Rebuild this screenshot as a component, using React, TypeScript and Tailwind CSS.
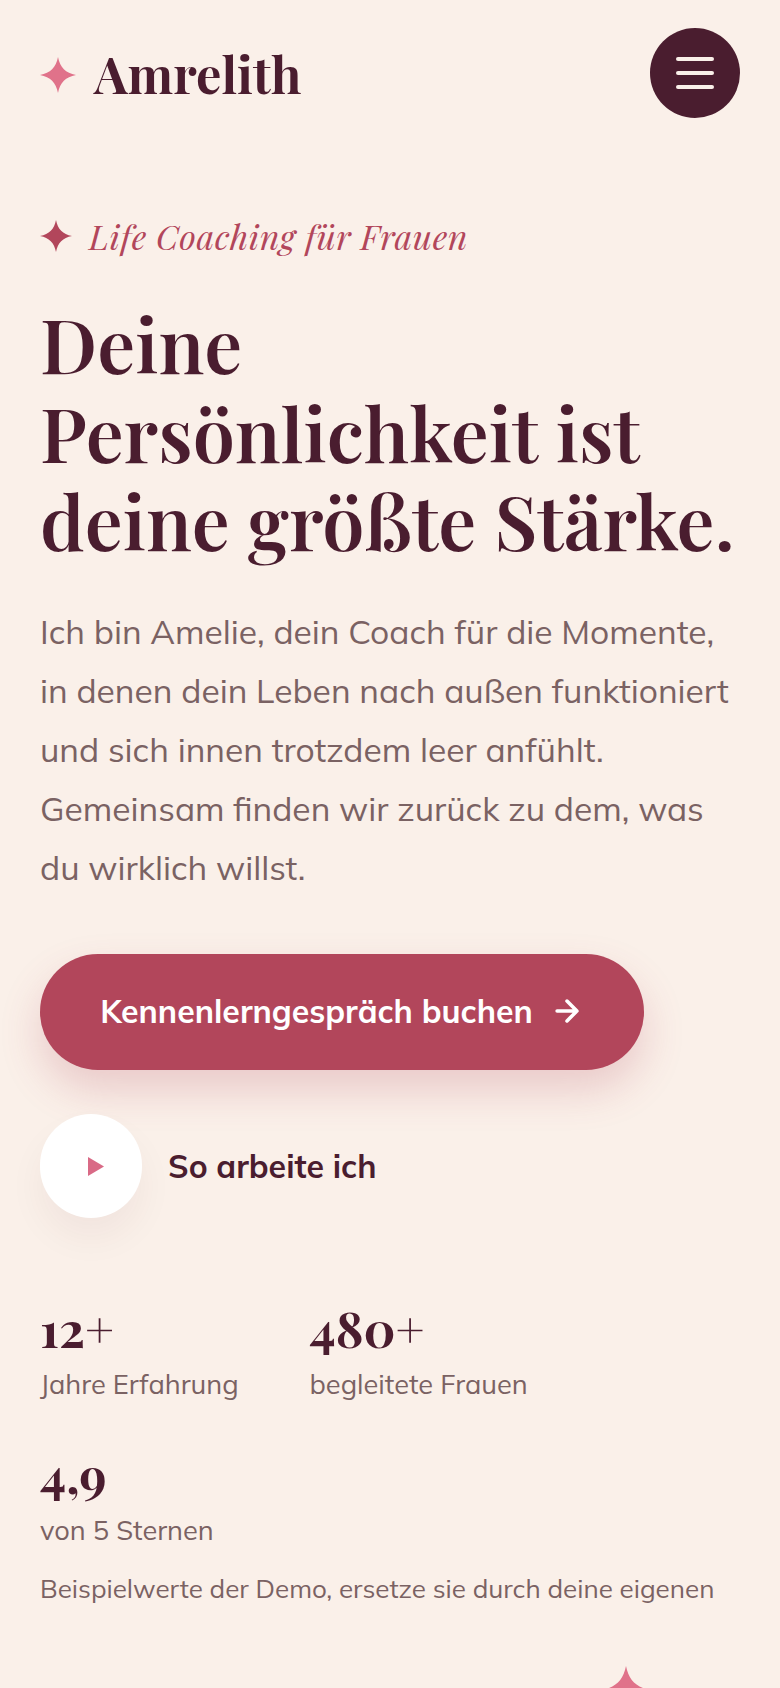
const serif = "font-['Playfair_Display','Liberation_Serif',serif]";
const sans = "font-['Mulish','Lato','Noto_Sans',sans-serif]";

function Sparkle({ className }: { className: string }) {
  return (
    <svg viewBox="0 0 24 24" className={className} fill="currentColor" aria-hidden="true">
      <path d="M12 0C13.4 7 17 10.6 24 12C17 13.4 13.4 17 12 24C10.6 17 7 13.4 0 12C7 10.6 10.6 7 12 0Z" />
    </svg>
  );
}

function Stat({ value, plus, label }: { value: string; plus?: boolean; label: string }) {
  return (
    <div>
      <div className={`${serif} text-[49.6px] leading-[60px] font-bold text-[#4a1d2f]`}>
        {value}
        {plus && <span className="font-normal">+</span>}
      </div>
      <div className="mt-[8px] text-[27.2px] leading-[38px] text-[#7a6263]">{label}</div>
    </div>
  );
}

export default function App() {
  return (
    <div className={`${sans} relative h-[1688px] overflow-hidden bg-[#faf0e9]`}>
      <header className="flex items-center justify-between pt-7 pr-10 pl-10">
        <div className="flex items-center gap-[18px]">
          <Sparkle className="mt-[3px] h-9 w-9 text-[#e0728a]" />
          <span className={`${serif} text-[50.4px] leading-none font-bold text-[#4a1d2f]`}>Amrelith</span>
        </div>
        <button className="flex h-[90px] w-[90px] flex-col items-center justify-center gap-[10px] rounded-full bg-[#4a1d2f]">
          <span className="h-1 w-[38px] rounded-full bg-[#faf0e9]" />
          <span className="h-1 w-[38px] rounded-full bg-[#faf0e9]" />
          <span className="h-1 w-[38px] rounded-full bg-[#faf0e9]" />
        </button>
      </header>

      <main className="px-10 pt-[94px]">
        <div className="flex items-center gap-[17px]">
          <Sparkle className="h-8 w-8 text-[#b2465b]" />
          <span className={`${serif} text-[34px] leading-[48px] tracking-[0.55px] text-[#b2465b] italic`}>Life Coaching für Frauen</span>
        </div>
        <h1 className={`${serif} mt-[39px] text-[75.4px] leading-[88.5px] font-semibold whitespace-nowrap text-[#4a1d2f]`}>
          Deine
          <br />
          Persönlichkeit ist
          <br />
          deine größte Stärke.
        </h1>
        <p className="mt-[37.5px] text-[33.6px] leading-[59px] text-[#7a6263]">
          Ich bin Amelie, dein Coach für die Momente,
          <br />
          in denen dein Leben nach außen funktioniert
          <br />
          und sich innen trotzdem leer anfühlt.
          <br />
          Gemeinsam finden wir zurück zu dem, was
          <br />
          du wirklich willst.
        </p>

        <div className="mt-[57px] flex h-[116px] w-[604px] items-center justify-center gap-[17px] rounded-full bg-[#b2465b] pb-[2px] shadow-[0_20px_40px_rgba(178,70,91,0.22)]">
          <span className="text-[32px] font-bold text-white">Kennenlerngespräch buchen</span>
          <svg viewBox="0 0 24 24" className="h-[34px] w-[34px] text-white" fill="none" stroke="currentColor" strokeWidth="2.5" strokeLinecap="round" strokeLinejoin="round">
            <path d="M5 12h14M12 5l7 7-7 7" />
          </svg>
        </div>

        <div className="mt-[44px] flex items-center gap-[26px]">
          <div className="flex h-[104px] w-[102px] items-center justify-center rounded-full bg-white shadow-[0_20px_36px_rgba(74,29,47,0.05)]">
            <svg viewBox="0 0 16 19" className="ml-[10px] h-[19px] w-[16px] text-[#d96a86]" fill="currentColor">
              <path d="M0 0L16 9.5L0 19Z" />
            </svg>
          </div>
          <span className="text-[32px] font-bold text-[#4a1d2f]">So arbeite ich</span>
        </div>

        <div className="mt-[79px] flex gap-[71px]">
          <Stat value="12" plus label="Jahre Erfahrung" />
          <Stat value="480" plus label="begleitete Frauen" />
        </div>
        <div className="mt-[40px]">
          <Stat value="4,9" label="von 5 Sternen" />
        </div>
        <p className="mt-[21px] text-[26px] leading-[38px] text-[#7a6263]">Beispielwerte der Demo, ersetze sie durch deine eigenen</p>
      </main>

      <Sparkle className="absolute top-[1666px] left-[602px] h-12 w-12 text-[#e0728a]" />
    </div>
  );
}
